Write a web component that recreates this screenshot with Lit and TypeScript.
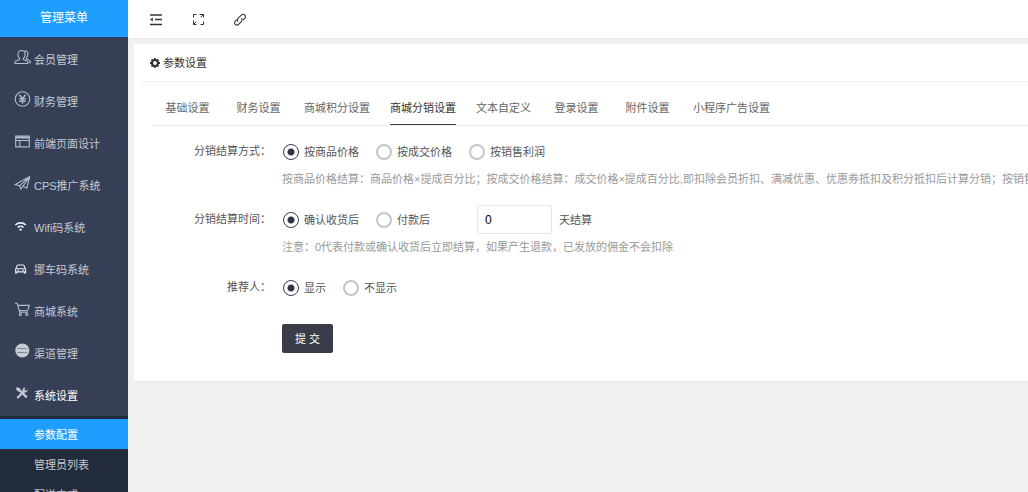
import { LitElement, html, css, svg, nothing, TemplateResult } from "lit";
import { customElement, property, state } from "lit/decorators.js";
import { classMap } from "lit/directives/class-map.js";

const icons: Record<string, TemplateResult> = {
  users: svg`<path d="M7.500 1.500c2.300 0 3.600 1.600 3.600 3.900 0 1.500-.6 2.900-1.700 3.900v1.100l3.400 1.700c.6.300.9.700.9 1.300v1.100H.9v-1.100c0-.6.300-1 .9-1.300l3.800-1.700V9.300C4.500 8.300 3.900 6.900 3.900 5.400c0-2.300 1.300-3.900 3.600-3.900z"/><path d="M10.600 1.700c2 0 3.300 1.400 3.300 3.600 0 1.400-.6 2.600-1.500 3.500v1.100l3 1.600c.6.300.9.700.9 1.300v1h-1.800"/>`,
  yen: svg`<circle cx="8.500" cy="8" r="7.300"/><path d="M5.400 3.800l3.100 4 3.100-4M8.500 7.800v5M5.300 8h6.400M5.300 10.300h6.400" stroke-width="1.400"/>`,
  page: svg`<path d="M1.700 3.100h13.600v10.800H1.700z"/><path d="M1.700 4.500h13.600" stroke-width="2"/><path d="M2 7.500h13M5.800 7.500v6"/>`,
  plane: svg`<path d="M1.200 9.500L15.700 1.600 12.800 13.200 9 11.200 6.800 14.200 5.600 10.800zM5.600 10.800l10.100-9.200L9 11.200"/>`,
  wifi: svg`<path d="M1.300 8c2.900-2.900 7.700-2.900 10.600 0M3.700 10.500c1.600-1.600 4.200-1.600 5.800 0" stroke-width="1.600"/><circle cx="6.600" cy="12.600" r="1.200" fill="currentColor" stroke="none"/>`,
  car: svg`<path d="M1.600 14v-3.700l1.600-3.700c.2-.4.500-.6.900-.6h5c.4 0 .7.200.9.600l1.600 3.700V14h-1.200v-1.100H2.800V14zM2.200 9.700h8.800M3.600 11.400h1.200M8.400 11.400h1.200" stroke-width="1.100"/>`,
  cart: svg`<path d="M.9 2.300h2.300l2.400 8.800h8.200M3.900 4.400h11.400l-1.600 4.800-8.400.3"/><circle cx="6.300" cy="13.400" r="1.100"/><circle cx="12.700" cy="13.400" r="1.100"/>`,
  ball: svg`<circle cx="8.300" cy="7.500" r="7" fill="currentColor" stroke="none"/><path d="M3.300 5.500h10M3.300 9.500h10" stroke="#7f889b"/>`,
  tools: svg`<path d="M5.200 4.800l7.600 7.600" stroke-width="2.300"/><path d="M2.400 2.200l3.300.9.700 2.600-1.500 1L2.300 5z" fill="currentColor" stroke="none"/><path d="M3.300 13l6.500-6.600" stroke-width="2.200"/><path d="M13.600 4.600l-2 1.200-1.300-1.300 1.300-2c-1.700-.4-3.200.9-3 2.700.2 1.700 1.700 2.600 3 2.200 1.200-.3 2-1.400 2-2.800z" fill="currentColor" stroke="none"/>`,
};

@customElement("side-menu")
export class SideMenu extends LitElement {
  static styles = css`
    :host { display: block; background: #363f55; color: #c3cad6; font-size: 11px; }
    .title { height: 37px; line-height: 37px; margin-bottom: 1px; background: #1e9fff; color: #fff; font-size: 12px; text-align: center; box-shadow: 0 1px 0 #2c3e5c; }
    a { display: flex; align-items: center; color: inherit; text-decoration: none; white-space: nowrap; }
    .item { height: 42px; padding-left: 14px; gap: 3px; }
    .item svg { width: 17px; height: 16px; flex: none; margin-bottom: 4px; fill: none; stroke: currentColor; stroke-width: 1.1; color: #b3bccb; }
    .item .bright { color: #e6ecf4; }
    .item .solid { color: #c6ccd6; }
    .open { color: #fff; }
    .sub { background: #222b3a; padding-top: 3px; }
    .sub a { height: 30px; padding-left: 34px; }
    .sub .current { background: #1e9fff; color: #fff; }
  `;
  private items = [
    ["users", "会员管理"], ["yen", "财务管理"], ["page", "前端页面设计"], ["plane", "CPS推广系统"],
    ["wifi", "Wifi码系统"], ["car", "挪车码系统"], ["cart", "商城系统"], ["ball", "渠道管理"], ["tools", "系统设置"],
  ];
  @state() private current = "参数配置";
  render() {
    return html`
      <div class="title">管理菜单</div>
      <nav>
        ${this.items.map(([icon, label]) => html`
          <a href="#" class=${classMap({ item: true, open: icon === "tools" })}>
            <svg viewBox="0 0 17 16" class=${classMap({ bright: icon === "wifi" || icon === "car", solid: icon === "ball" || icon === "tools" })} aria-hidden="true">${icons[icon]}</svg>
            <span>${label}</span>
          </a>`)}
        <div class="sub">
          ${["参数配置", "管理员列表", "配送方式"].map((t) => html`
            <a href="#" class=${classMap({ current: t === this.current })} @click=${() => (this.current = t)}>${t}</a>`)}
        </div>
      </nav>`;
  }
}

@customElement("radio-group")
export class RadioGroup extends LitElement {
  static styles = css`
    :host { display: flex; gap: 17px; }
    label { display: flex; align-items: center; gap: 5px; line-height: 14px; white-space: nowrap; }
    input { appearance: none; box-sizing: border-box; width: 16px; height: 16px; margin: 0; border: 2px solid #c6c6c6; border-radius: 50%; background: #fff; }
    input:checked { border: 1px solid #393d49; background: radial-gradient(circle, #2f3645 3px, #fff 4px); }
  `;
  @property() name = "";
  @property({ type: Array }) options: string[] = [];
  render() {
    return this.options.map((o, i) => html`
      <label><input type="radio" name=${this.name} .value=${o} ?checked=${i === 0} />${o}</label>`);
  }
}

@customElement("settings-panel")
export class SettingsPanel extends LitElement {
  static styles = css`
    :host { display: block; background: #fff; border-bottom: 1px solid #e4e4e4; padding-bottom: 28px; color: #555; overflow: hidden; }
    h1 { display: flex; align-items: center; gap: 3px; margin: 0 0 0 7px; padding-left: 9px; height: 37px; border-bottom: 1px solid #f0f0f0; font-size: 11px; line-height: 38px; font-weight: 400; color: #333; }
    h1 svg { width: 10px; height: 10px; }
    .tabs { display: flex; margin: 8px 0 11px 18px; border-bottom: 1px solid #eee; }
    .tab { min-width: 71px; height: 35px; padding: 0 10px; border: 0; background: none; font: inherit; color: #666; white-space: nowrap; }
    .tab span { display: block; height: 34px; line-height: 36px; border-bottom: 1px solid transparent; }
    .tab.active { color: #333; }
    .tab.active span { border-color: #393d49; }
    .row { display: grid; grid-template-columns: 137px minmax(0, 1fr); column-gap: 12px; margin-bottom: 17px; }
    .name { text-align: right; line-height: 29px; }
    .line { display: flex; align-items: center; height: 29px; }
    .hint { margin: 4px 0 0 -1px; line-height: 18px; color: #999; white-space: nowrap; }
    .days { display: flex; align-items: center; gap: 7px; margin-left: 47px; }
    .days input { box-sizing: border-box; width: 75px; height: 29px; padding: 0 7px; border: 1px solid #e6e6e6; border-radius: 2px; font: inherit; font-size: 12px; color: #000; }
    .days label { line-height: 14px; }
    .submit { display: block; height: 29px; margin: 22px 0 0 148px; padding: 0 13px; border: 0; border-radius: 2px; background: #393d49; color: #fff; font: inherit; line-height: 28px; }
  `;
  @state() private active = "商城分销设置";
  private row(label: string, options: string[], hint?: string, extra?: TemplateResult) {
    return html`
      <div class="row" role="group" aria-label=${label}>
        <span class="name">${label}：</span>
        <div>
          <div class="line"><radio-group name=${label} .options=${options}></radio-group>${extra ?? nothing}</div>
          ${hint ? html`<div class="hint">${hint}</div>` : nothing}
        </div>
      </div>`;
  }
  render() {
    return html`
      <h1>
        <svg viewBox="0 0 10 10" aria-hidden="true"><circle cx="5" cy="5" r="2.900" fill="none" stroke="#333" stroke-width="2"/><path d="M5 0v2M5 8v2M0 5h2M8 5h2M1.500 1.500l1.300 1.300M7.200 7.200l1.300 1.300M8.500 1.500L7.200 2.800M2.800 7.200L1.500 8.500" stroke="#333" stroke-width="1.800"/></svg>
        参数设置
      </h1>
      <div class="tabs" role="tablist">
        ${["基础设置", "财务设置", "商城积分设置", "商城分销设置", "文本自定义", "登录设置", "附件设置", "小程序广告设置"].map((t) => html`
          <button type="button" role="tab" class=${classMap({ tab: true, active: t === this.active })}
            aria-selected=${t === this.active} @click=${() => (this.active = t)}><span>${t}</span></button>`)}
      </div>
      <form @submit=${(e: Event) => e.preventDefault()}>
        ${this.row("分销结算方式", ["按商品价格", "按成交价格", "按销售利润"], "按商品价格结算：商品价格×提成百分比；按成交价格结算：成交价格×提成百分比,即扣除会员折扣、满减优惠、优惠券抵扣及积分抵扣后计算分销；按销售利润结算")}
        ${this.row("分销结算时间", ["确认收货后", "付款后"], "注意：0代表付款或确认收货后立即结算，如果产生退款，已发放的佣金不会扣除",
          html`<div class="days"><input id="days" type="text" value="0" /><label for="days">天结算</label></div>`)}
        ${this.row("推荐人", ["显示", "不显示"])}
        <button class="submit">提 交</button>
      </form>`;
  }
}

@customElement("app-root")
export class AppRoot extends LitElement {
  static styles = css`
    :host { display: grid; grid-template-columns: 128px minmax(0, 1fr); height: 100vh; overflow: hidden; background: #f1f1f1; font: 11px "Liberation Sans", "Noto Sans CJK SC", sans-serif; }
    .bar { display: flex; align-items: center; gap: 26px; height: 38px; padding-left: 20px; background: #fff; border-bottom: 1px solid #e9e9e9; margin-bottom: 5px; }
    .bar button { display: block; width: 16px; height: 16px; padding: 0; border: 0; background: none; color: #333; }
    .bar svg { display: block; width: 16px; height: 16px; fill: none; stroke: currentColor; }
    settings-panel { margin-left: 6px; }
  `;
  render() {
    return html`
      <side-menu></side-menu>
      <main>
        <div class="bar">
          <button type="button" aria-label="收起菜单"><svg viewBox="0 0 16 16"><path d="M2 4h12M7 8.500h7M2 13.500h12" stroke-width="1.300"/><path d="M4.800 6.500v4L2 8.500zM4 8.500h3" fill="currentColor" stroke="none"/></svg></button>
          <button type="button" aria-label="全屏"><svg viewBox="0 0 16 16" stroke="#555"><path d="M3.500 6.500v-3h3M9.500 3.500h4v3M13.500 10.500v3h-3M6.500 13.500h-3v-4M13.500 3.500l-2.800 2.800M3.500 13.500l2.800-2.800"/></svg></button>
          <button type="button" aria-label="链接"><svg viewBox="0 0 16 16" stroke="#444" stroke-width="1.100"><path d="M6.300 10.600c-1.200-1-1-2.400 0-3.400l2.800-2.900c1.100-1.100 2.600-1.200 3.600-.3s.9 2.400-.1 3.500L11.200 9"/><path d="M9.300 7.200c1.200 1 1 2.400 0 3.400l-2.400 2.500c-1.100 1.100-2.600 1.200-3.600.3s-.9-2.400.1-3.500l1.300-1.300"/></svg></button>
        </div>
        <settings-panel></settings-panel>
      </main>`;
  }
}
